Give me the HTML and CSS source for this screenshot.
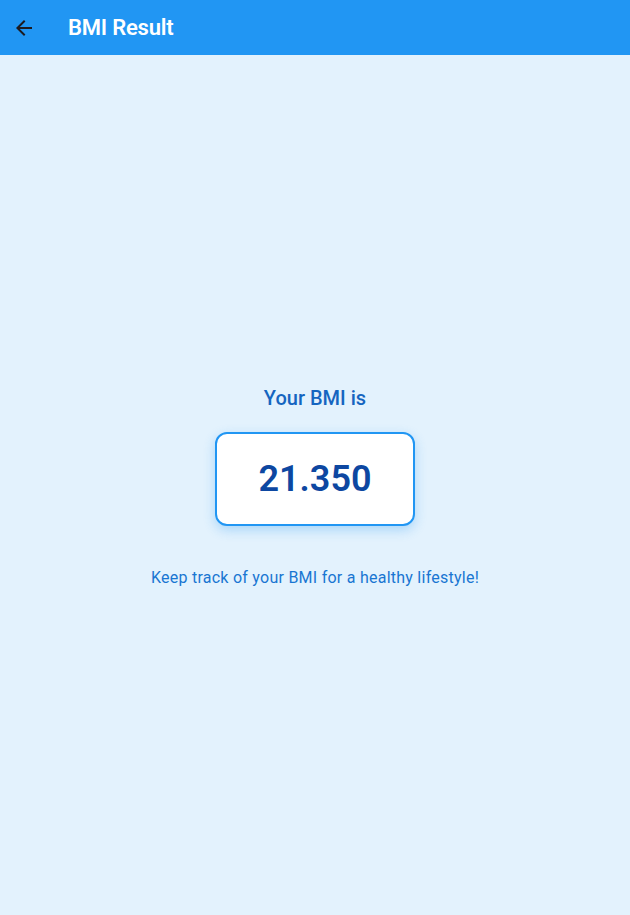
FILE: index.html
```html
<!DOCTYPE html>
<html>
<head>
<meta charset="utf-8">
<link rel="stylesheet" href="styles.css">
</head>
<body>
<header class="appbar">
  <button class="back" aria-label="Back">
    <svg width="24" height="24" viewBox="0 0 24 24"><path d="M20 11H7.83l5.59-5.59L12 4l-8 8 8 8 1.41-1.41L7.83 13H20v-2z" fill="#1d1b20"/></svg>
  </button>
  <h1 class="title">BMI Result</h1>
</header>
<main class="body">
  <div class="content">
    <div class="label">Your BMI is</div>
    <div class="card"><span class="value">21.350</span></div>
    <p class="note">Keep track of your BMI for a healthy lifestyle!</p>
  </div>
</main>
</body>
</html>
```
FILE: styles.css
```css
html, body {
  margin: 0;
  padding: 0;
  height: 100%;
}
body {
  font-family: Roboto, "Liberation Sans", sans-serif;
  background: #e3f2fd;
  display: flex;
  flex-direction: column;
}
.appbar {
  height: 55px;
  background: #2196f3;
  display: flex;
  align-items: center;
  flex-shrink: 0;
}
.back {
  width: 24px;
  height: 24px;
  margin-left: 12px;
  padding: 0;
  border: 0;
  background: none;
  display: flex;
}
.title {
  margin: 0 0 0 32px;
  color: #fff;
  font-size: 22px;
  font-weight: 600;
  letter-spacing: -0.2px;
}
.body {
  flex: 1;
  display: flex;
  align-items: center;
  justify-content: center;
  padding-top: 4px;
}
.content {
  display: flex;
  flex-direction: column;
  align-items: center;
}
.label {
  color: #1565c0;
  font-size: 20px;
  font-weight: 500;
  line-height: 24px;
}
.card {
  margin-top: 22px;
  width: 196px;
  height: 90px;
  border: 2px solid #2196f3;
  border-radius: 12px;
  background: #fff;
  box-shadow: 0 4px 12px rgba(33, 150, 243, 0.3);
  display: flex;
  align-items: center;
  justify-content: center;
}
.value {
  color: #0d47a1;
  font-size: 36px;
  font-weight: 600;
  line-height: 42px;
}
.note {
  margin: 42px 0 0;
  color: #1976d2;
  font-size: 16px;
  line-height: 20px;
  letter-spacing: 0.25px;
}
```
